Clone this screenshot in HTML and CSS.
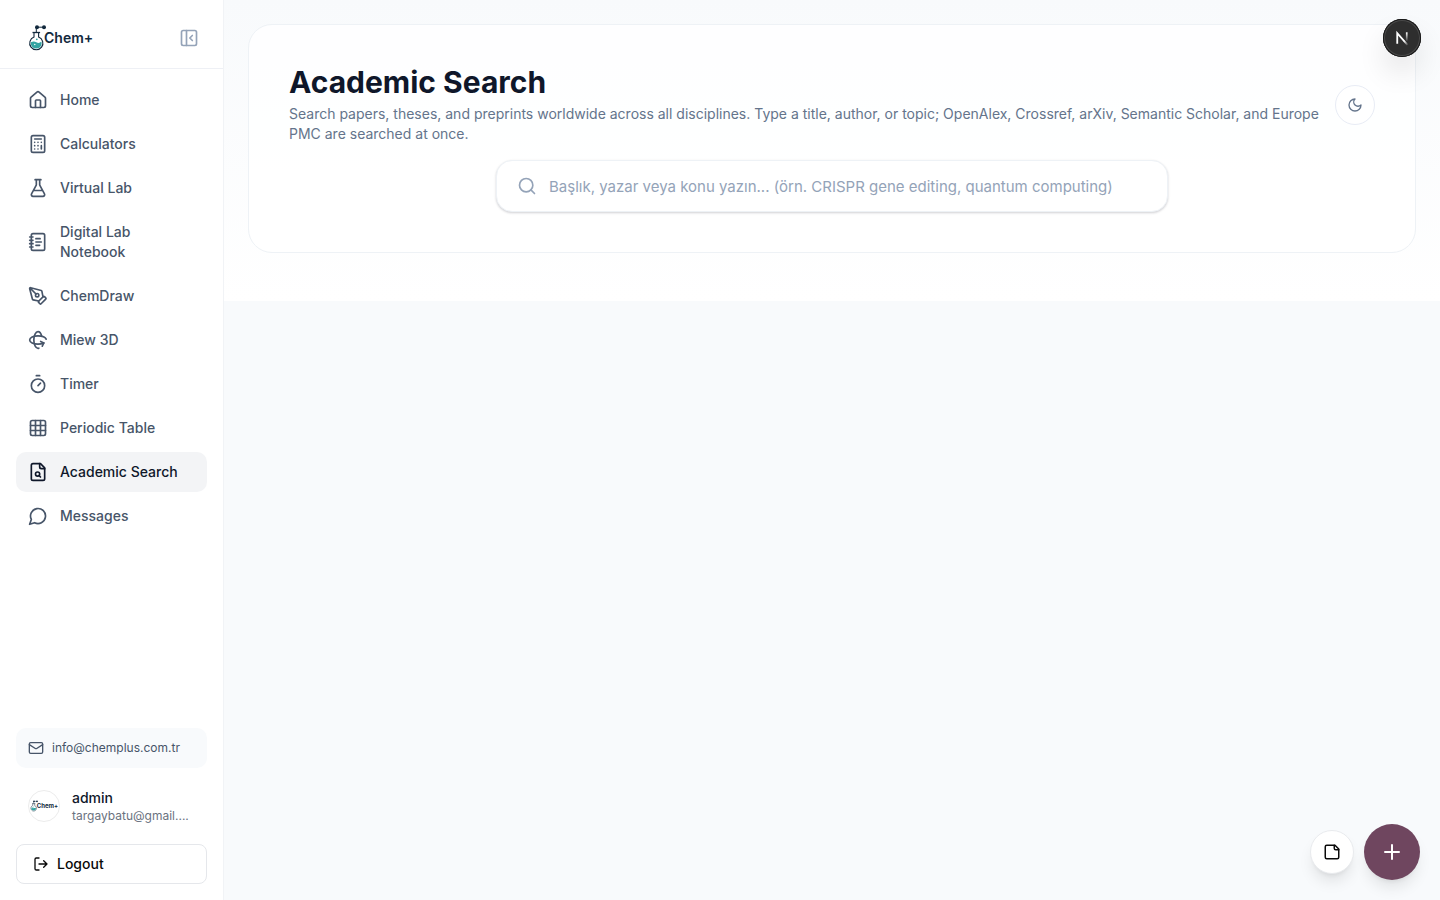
FILE: index.html
```html
<!DOCTYPE html>
<html lang="en">
<head>
<meta charset="utf-8">
<meta name="viewport" content="width=device-width, initial-scale=1">
<title>Academic Search</title>
<link rel="stylesheet" href="styles.css">
</head>
<body>
<svg class="defs" aria-hidden="true">
  <symbol id="flask-logo" viewBox="0 0 18 28">
    <path d="M8.300 8.500V3.200H16" fill="none" stroke="#12293d" stroke-width="1"/>
    <circle cx="9" cy="3.200" r="2" fill="#12293d"/>
    <circle cx="16" cy="3.200" r="2" fill="#12293d"/>
    <path d="M6 8.500V13a6.600 6.600 0 1 0 4.600 0V8.500" fill="#fff" stroke="#12293d" stroke-width="1.100"/>
    <path d="M4.500 8.500h7.600" stroke="#12293d" stroke-width="1.300"/>
    <path d="M3 18.300q2.700-1.500 5.400 0t5-.800c1 4.200-1.500 7-5.100 7s-6-2.800-5.300-6.200z" fill="#35a5a3"/>
    <circle cx="8.800" cy="15.300" r=".9" fill="#35a5a3"/>
    <circle cx="6.800" cy="20.500" r=".7" fill="#fff"/>
  </symbol>
</svg>
<div class="app">
  <aside class="sidebar">
    <header class="brand-bar">
      <a class="brand" href="#" aria-label="Chem+">
        <svg class="brand-mark"><use href="#flask-logo"/></svg><span class="brand-name">Chem+</span>
      </a>
      <button class="collapse" type="button" aria-label="Collapse sidebar">
        <svg class="icon" viewBox="0 0 24 24"><rect x="3" y="3" width="18" height="18" rx="2"/><path d="M9 3v18M16 15l-3-3 3-3"/></svg>
      </button>
    </header>
    <nav class="nav">
      <a class="nav-item" href="#"><svg class="icon" viewBox="0 0 24 24"><path d="M15 21v-8a1 1 0 0 0-1-1h-4a1 1 0 0 0-1 1v8"/><path d="M3 10a2 2 0 0 1 .709-1.528l7-5.999a2 2 0 0 1 2.582 0l7 5.999A2 2 0 0 1 21 10v9a2 2 0 0 1-2 2H5a2 2 0 0 1-2-2z"/></svg><span>Home</span></a>
      <a class="nav-item" href="#"><svg class="icon" viewBox="0 0 24 24"><rect x="4" y="2" width="16" height="20" rx="2"/><path d="M8 6h8M16 14v4M16 10h.01M12 10h.01M8 10h.01M12 14h.01M8 14h.01M12 18h.01M8 18h.01"/></svg><span>Calculators</span></a>
      <a class="nav-item" href="#"><svg class="icon" viewBox="0 0 24 24"><path d="M14 2v6a2 2 0 0 0 .245.960l5.510 10.080A2 2 0 0 1 18 22H6a2 2 0 0 1-1.755-2.960l5.510-10.080A2 2 0 0 0 10 8V2M6.453 15h11.094M8.500 2h7"/></svg><span>Virtual Lab</span></a>
      <a class="nav-item" href="#"><svg class="icon" viewBox="0 0 24 24"><rect x="4" y="2" width="16" height="20" rx="2"/><path d="M2 6h4M2 10h4M2 14h4M2 18h4M9.500 8h5M9.500 12H16M9.500 16H14"/></svg><span>Digital Lab Notebook</span></a>
      <a class="nav-item" href="#"><svg class="icon" viewBox="0 0 24 24"><path d="M15.707 21.293a1 1 0 0 1-1.414 0l-1.586-1.586a1 1 0 0 1 0-1.414l5.586-5.586a1 1 0 0 1 1.414 0l1.586 1.586a1 1 0 0 1 0 1.414z"/><path d="m18 13-1.375-6.874a1 1 0 0 0-.746-.776L3.235 2.028a1 1 0 0 0-1.207 1.207L5.350 15.879a1 1 0 0 0 .776.746L13 18M2.300 2.300l7.286 7.286"/><circle cx="11" cy="11" r="2"/></svg><span>ChemDraw</span></a>
      <a class="nav-item" href="#"><svg class="icon" viewBox="0 0 24 24"><path d="M16.466 7.500C15.643 4.237 13.952 2 12 2 9.239 2 7 6.477 7 12s2.239 10 5 10c.342 0 .677-.069 1-.2"/><path d="m15.194 13.707 3.814 1.860-1.860 3.814"/><path d="M19 15.570c-1.804.885-4.274 1.430-7 1.430-5.523 0-10-2.239-10-5s4.477-5 10-5c4.838 0 8.873 1.718 9.800 4"/></svg><span>Miew 3D</span></a>
      <a class="nav-item" href="#"><svg class="icon" viewBox="0 0 24 24"><path d="M10 2h4M12 14l3-3"/><circle cx="12" cy="14" r="8"/></svg><span>Timer</span></a>
      <a class="nav-item" href="#"><svg class="icon" viewBox="0 0 24 24"><rect x="3" y="3" width="18" height="18" rx="2"/><path d="M3 9h18M3 15h18M9 3v18M15 3v18"/></svg><span>Periodic Table</span></a>
      <a class="nav-item active" href="#" aria-current="page"><svg class="icon" viewBox="0 0 24 24"><path d="M15 2H6a2 2 0 0 0-2 2v16a2 2 0 0 0 2 2h12a2 2 0 0 0 2-2V7Z"/><path d="M14 2v4a2 2 0 0 0 2 2h4M13.300 16.300 15 18"/><circle cx="11.500" cy="14.500" r="2.500"/></svg><span>Academic Search</span></a>
      <a class="nav-item" href="#"><svg class="icon" viewBox="0 0 24 24"><path d="M7.900 20A9 9 0 1 0 4 16.100L2 22Z"/></svg><span>Messages</span></a>
    </nav>
    <footer class="side-foot">
      <a class="contact" href="mailto:info@chemplus.com.tr"><svg class="icon small" viewBox="0 0 24 24"><rect x="2" y="4" width="20" height="16" rx="2"/><path d="m22 7-8.970 5.700a1.940 1.940 0 0 1-2.060 0L2 7"/></svg><span>info@chemplus.com.tr</span></a>
      <div class="user">
        <div class="avatar"><svg class="avatar-mark"><use href="#flask-logo"/></svg><span>Chem+</span></div>
        <div class="user-text">
          <div class="user-name">admin</div>
          <div class="user-mail">targaybatu@gmail....</div>
        </div>
      </div>
      <button class="logout" type="button"><svg class="icon small" viewBox="0 0 24 24"><path d="m16 17 5-5-5-5M21 12H9M9 21H5a2 2 0 0 1-2-2V5a2 2 0 0 1 2-2h4"/></svg>Logout</button>
    </footer>
  </aside>
  <main class="main">
    <section class="hero">
      <div class="card">
        <div class="card-head">
          <div class="heading">
            <h1>Academic Search</h1>
            <p>Search papers, theses, and preprints worldwide across all disciplines. Type a title, author, or topic; OpenAlex, Crossref, arXiv, Semantic Scholar, and Europe PMC are searched at once.</p>
          </div>
          <button class="theme" type="button" aria-label="Toggle theme"><svg class="icon small" viewBox="0 0 24 24"><path d="M12 3a6 6 0 0 0 9 9 9 9 0 1 1-9-9Z"/></svg></button>
        </div>
        <form class="search" role="search">
          <svg class="icon" viewBox="0 0 24 24"><circle cx="11" cy="11" r="8"/><path d="m21 21-4.300-4.300"/></svg>
          <input type="search" aria-label="Search papers" placeholder="Başlık, yazar veya konu yazın... (örn. CRISPR gene editing, quantum computing)">
        </form>
      </div>
    </section>
  </main>
</div>
<button class="dev-badge" type="button" aria-label="Open developer tools">
  <svg viewBox="0 0 40 40" aria-hidden="true">
    <defs>
      <linearGradient id="diag" x1="15" y1="15" x2="27" y2="27" gradientUnits="userSpaceOnUse"><stop offset=".65" stop-color="#fff"/><stop offset="1" stop-color="#fff" stop-opacity="0"/></linearGradient>
      <linearGradient id="stem" x1="0" y1="14" x2="0" y2="24" gradientUnits="userSpaceOnUse"><stop stop-color="#fff"/><stop offset="1" stop-color="#fff" stop-opacity="0"/></linearGradient>
    </defs>
    <path d="M15 26V15L26 27.500" fill="none" stroke="url(#diag)" stroke-width="1.900"/>
    <path d="M25 14v9" stroke="url(#stem)" stroke-width="1.800"/>
  </svg>
</button>
<div class="actions">
  <button class="note" type="button" aria-label="Notes"><svg class="icon" viewBox="0 0 24 24"><path d="M16 3H5a2 2 0 0 0-2 2v14a2 2 0 0 0 2 2h14a2 2 0 0 0 2-2V8Z"/><path d="M15 3v4a2 2 0 0 0 2 2h4"/></svg></button>
  <button class="add" type="button" aria-label="Add"><svg class="icon" viewBox="0 0 24 24"><path d="M5 12h14M12 5v14"/></svg></button>
</div>
</body>
</html>
```
FILE: styles.css
```css
* { box-sizing: border-box; }
body {
  margin: 0;
  font-family: Inter, "Liberation Sans", sans-serif;
  font-size: 14px;
  line-height: 20px;
  color: #0f172a;
  background: #f8fafc;
}
button, input { font: inherit; color: inherit; }
button { padding: 0; border: 0; background: none; cursor: pointer; }
a { color: inherit; text-decoration: none; }
h1, p { margin: 0; }
.defs { position: absolute; width: 0; height: 0; }
.icon {
  display: block;
  flex: none;
  width: 20px;
  height: 20px;
  fill: none;
  stroke: currentColor;
  stroke-width: 2;
  stroke-linecap: round;
  stroke-linejoin: round;
}
.icon.small { width: 16px; height: 16px; }

.app { display: flex; min-height: 100vh; }
.sidebar {
  display: flex;
  flex-direction: column;
  flex: none;
  width: 224px;
  background: #fff;
  border-right: 1px solid #f1f3f6;
}
.brand-bar {
  display: flex;
  align-items: center;
  justify-content: space-between;
  padding: 24px 24px 16px 28px;
  border-bottom: 1px solid #eef0f5;
}
.brand { display: flex; align-items: center; }
.brand-mark { flex: none; width: 18px; height: 28px; margin-right: -2px; }
.brand-name { font-weight: 600; color: #12293d; }
.collapse { color: #94a3b8; }
.nav { display: flex; flex-direction: column; flex: 1; gap: 4px; padding: 11px 16px; }
.nav-item {
  display: flex;
  align-items: center;
  gap: 12px;
  padding: 10px 12px;
  border-radius: 10px;
  font-weight: 500;
  color: #475569;
}
.nav-item.active { background: #f3f4f6; color: #0f172a; }
.side-foot { display: flex; flex-direction: column; gap: 12px; padding: 16px; }
.contact {
  display: flex;
  align-items: center;
  gap: 8px;
  padding: 12px;
  border-radius: 10px;
  background: #f8fafc;
  font-size: 12px;
  line-height: 16px;
  color: #475569;
}
.user { display: flex; align-items: center; gap: 12px; padding: 8px 12px; }
.avatar {
  display: flex;
  align-items: center;
  justify-content: center;
  flex: none;
  width: 32px;
  height: 32px;
  border: 1px solid #ececec;
  border-radius: 50%;
  font-size: 6px;
  font-weight: 700;
  color: #12293d;
}
.avatar-mark { flex: none; width: 8px; height: 12px; margin-right: -1px; }
.user-text { min-width: 0; }
.user-name { font-weight: 500; }
.user-mail {
  font-size: 12px;
  line-height: 16px;
  color: #6b7280;
  white-space: nowrap;
}
.logout {
  display: flex;
  align-items: center;
  gap: 8px;
  padding: 9px 16px;
  border: 1px solid #e5e7eb;
  border-radius: 8px;
  font-weight: 500;
  color: #0a0a0a;
}

.main { flex: 1; min-width: 0; }
.hero { padding: 24px 24px 48px; background: linear-gradient(#f8fafc, #fff); }
.card {
  padding: 40px;
  border: 1px solid #eef2f6;
  border-radius: 24px;
  background: rgba(255, 255, 255, 0.8);
}
.card-head { display: flex; align-items: center; justify-content: space-between; gap: 16px; }
.heading { min-width: 0; }
h1 { font-size: 30px; line-height: 35px; font-weight: 700; }
.heading p { margin-top: 4px; color: #64748b; }
.theme {
  display: grid;
  place-items: center;
  flex: none;
  width: 40px;
  height: 40px;
  border: 1px solid #e8ecf5;
  border-radius: 50%;
  background: #fff;
  color: #64748b;
}
.search {
  display: flex;
  align-items: center;
  gap: 12px;
  max-width: 672px;
  margin: 16px auto 0;
  padding: 13px 20px;
  border: 1px solid #eef2f6;
  border-radius: 16px;
  background: #fff;
  box-shadow: 0 1px 3px rgba(15, 23, 42, 0.1), 0 1px 2px rgba(15, 23, 42, 0.1);
  color: #94a3b8;
}
.search input {
  flex: 1;
  min-width: 0;
  height: 24px;
  padding: 0;
  border: 0;
  outline: 0;
  background: none;
  font-size: 15px;
  color: #0f172a;
}
.search input::placeholder { color: #94a3b8; opacity: 1; }

.dev-badge {
  position: fixed;
  top: 18px;
  right: 18px;
  width: 40px;
  height: 40px;
  border: 1px solid transparent;
  border-radius: 50%;
  background: #2e2e2e;
  background-clip: padding-box;
  box-shadow: inset 0 0 0 1px #171717, inset 0 0 0 2px #4a4a4a, 0 16px 32px -8px rgba(0, 0, 0, 0.24);
}
.dev-badge svg { display: block; width: 100%; height: 100%; }
.actions {
  position: fixed;
  right: 20px;
  bottom: 20px;
  display: flex;
  align-items: center;
  gap: 10px;
}
.note, .add { display: grid; place-items: center; border-radius: 50%; }
.note {
  width: 44px;
  height: 44px;
  border: 1px solid #e8eaed;
  background: #fff;
  color: #0a0a0a;
  box-shadow: 0 10px 15px -3px rgba(0, 0, 0, 0.1), 0 4px 6px -4px rgba(0, 0, 0, 0.1);
}
.add {
  width: 56px;
  height: 56px;
  background: #6f465f;
  color: #fff;
  box-shadow: 0 10px 15px -3px rgba(0, 0, 0, 0.1), 0 4px 6px -4px rgba(0, 0, 0, 0.1);
}
.note .icon { width: 18px; height: 18px; }
.add .icon { width: 24px; height: 24px; }
```
